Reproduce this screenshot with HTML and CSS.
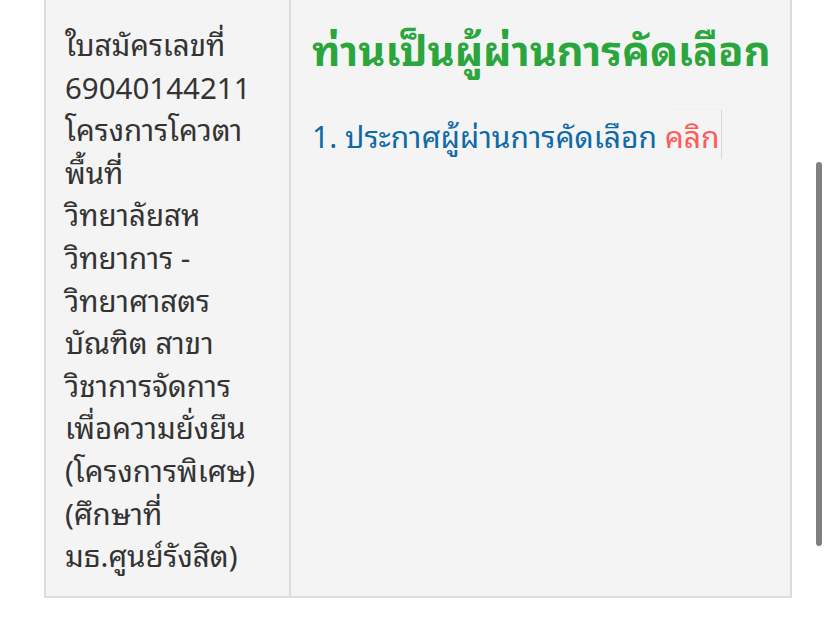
FILE: index.html
```html
<!DOCTYPE html>
<html lang="th">
<head>
<meta charset="utf-8">
<link rel="stylesheet" href="styles.css">
</head>
<body>
<div class="page">
  <div class="table">
    <div class="cell cell-left">
      ใบสมัครเลขที่<br>69040144211<br>โครงการโควตา<br>พื้นที่<br>วิทยาลัยสห<br>วิทยาการ -<br>วิทยาศาสตร<br>บัณฑิต สาขา<br>วิชาการจัดการ<br>เพื่อความยั่งยืน<br>(โครงการพิเศษ)<br>(ศึกษาที่<br>มธ.ศูนย์รังสิต)
    </div>
    <div class="cell cell-right">
      <h1 class="title">ท่านเป็นผู้ผ่านการคัดเลือก</h1>
      <p class="item">1. ประกาศผู้ผ่านการคัดเลือก <a class="link" href="#">คลิก</a></p>
    </div>
  </div>
  <div class="scrollbar"></div>
</div>
</body>
</html>
```
FILE: styles.css
```css
html, body {
  margin: 0;
  padding: 0;
  background: #ffffff;
}
body {
  font-family: "Noto Sans Thai Looped", "Noto Sans Thai UI", "Garuda", "Loma", "Tlwg Typo", "Noto Sans Thai", "Noto Sans", sans-serif;
  width: 828px;
  height: 619px;
  overflow: hidden;
}
.page {
  position: relative;
  width: 828px;
  height: 619px;
}
.table {
  display: flex;
  margin-left: 44px;
  width: 748px;
  background: #f4f4f4;
  border: 2px solid #dcdcdc;
  border-top: none;
  box-sizing: border-box;
}
.cell {
  box-sizing: border-box;
}
.cell-left {
  width: 245px;
  padding: 22px 10px 20px 19px;
  border-right: 2px solid #dcdcdc;
  font-size: 29.5px;
  line-height: 42.6px;
  color: #333333;
  white-space: nowrap;
}
.cell-right {
  flex: 1;
  padding: 20px 10px 20px 21px;
}
.title {
  margin: 0;
  font-size: 41.5px;
  line-height: 56px;
  font-weight: 700;
  color: #2aa63c;
  white-space: nowrap;
}
.item {
  margin: 37px 0 0;
  font-size: 30px;
  line-height: 44px;
  color: #0e6aa6;
}
.link {
  color: #ff5a5a;
  text-decoration: none;
  border-right: 1px solid #d8d8d8;
  border-top: 1px solid #f0f0f0;
  padding-right: 1px;
}
.scrollbar {
  position: absolute;
  left: 816px;
  top: 162px;
  width: 6px;
  height: 384px;
  border-radius: 3px;
  background: #808080;
}
```
